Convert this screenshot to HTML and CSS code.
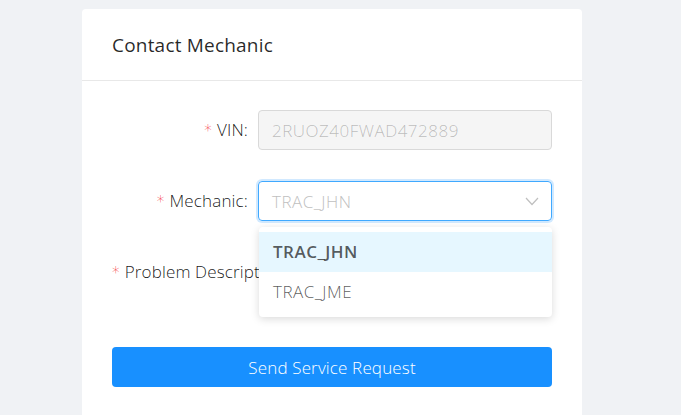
FILE: index.html
```html
<!DOCTYPE html>
<html lang="en">
<head>
<meta charset="utf-8">
<title>Contact Mechanic</title>
<link rel="stylesheet" href="styles.css">
</head>
<body>
<div class="card">
  <div class="card-head">Contact Mechanic</div>
  <div class="card-body">
    <div class="form-row">
      <div class="label"><span class="req">*</span>VIN:</div>
      <div class="control">
        <div class="input disabled caps">2RUOZ40FWAD472889</div>
      </div>
    </div>
    <div class="form-row">
      <div class="label"><span class="req">*</span>Mechanic:</div>
      <div class="control">
        <div class="input select focused">
          <span class="placeholder caps">TRAC_JHN</span>
          <svg class="chevron" width="14" height="9" viewBox="0 0 14 9"><polyline points="1,1 7,7.5 13,1" fill="none" stroke="#bfbfbf" stroke-width="1.2"/></svg>
        </div>
        <div class="dropdown">
          <div class="option active caps">TRAC_JHN</div>
          <div class="option caps">TRAC_JME</div>
        </div>
      </div>
    </div>
    <div class="form-row tall">
      <div class="label long"><span class="req">*</span>Problem Description:</div>
      <div class="control">
        <div class="textarea"></div>
      </div>
    </div>
    <button class="btn">Send Service Request</button>
  </div>
</div>
</body>
</html>
```

FILE: styles.css
```css
html, body {
  margin: 0;
  padding: 0;
}
body {
  background: #f0f2f5;
  font-family: "Open Sans", "Noto Sans", sans-serif;
  font-weight: 300;
  width: 681px;
  height: 415px;
  overflow: hidden;
}
.card {
  margin: 9px 0 0 82px;
  width: 500px;
  height: 460px;
  background: #fff;
  border-radius: 4px;
}
.card-head {
  height: 72px;
  border-bottom: 1px solid #e8e8e8;
  padding: 0 30px;
  display: flex;
  align-items: center;
  font-size: 19px;
  letter-spacing: 0.2px;
  font-weight: 400;
  color: rgba(0, 0, 0, 0.85);
  box-sizing: border-box;
}
.card-body {
  padding: 29px 30px 0;
}
.form-row {
  display: grid;
  grid-template-columns: 146px 294px;
  margin-bottom: 30px;
}
.form-row.tall {
  height: 67px;
  margin-bottom: 28px;
}
.label {
  font-size: 17px;
  letter-spacing: 0.15px;
  line-height: 40px;
  color: rgba(0, 0, 0, 0.9);
  text-align: right;
  padding-right: 10px;
  white-space: nowrap;
}
.label.long {
  padding-right: 0;
}
.req {
  color: #f5222d;
  margin-right: 5px;
  font-family: "DejaVu Sans", sans-serif;
  font-size: 15px;
}
.control {
  position: relative;
}
.input {
  height: 40px;
  box-sizing: border-box;
  border: 1px solid #d9d9d9;
  border-radius: 4px;
  padding: 0 13px;
  display: flex;
  align-items: center;
  font-size: 17px;
  color: rgba(0, 0, 0, 0.65);
}
.caps {
  letter-spacing: 0.5px;
}
.input.disabled {
  background: #f5f5f5;
  color: rgba(0, 0, 0, 0.25);
}
.select {
  justify-content: space-between;
}
.select.focused {
  border-color: #40a9ff;
  box-shadow: 0 0 0 2px rgba(24, 144, 255, 0.2);
}
.placeholder {
  color: #bfbfbf;
}
.chevron {
  margin-right: -1px;
}
.textarea {
  height: 60px;
}
.dropdown {
  position: absolute;
  top: 46px;
  left: 1px;
  right: 0;
  background: #fff;
  border-radius: 4px;
  padding: 5px 0;
  box-shadow: 0 2px 8px rgba(0, 0, 0, 0.15);
  z-index: 10;
}
.option {
  height: 40px;
  line-height: 40px;
  padding: 0 14px;
  font-size: 17px;
  color: rgba(0, 0, 0, 0.65);
}
.option.active {
  background: #e6f7ff;
  font-weight: 600;
}
.btn {
  display: block;
  width: 440px;
  height: 40px;
  border: none;
  border-radius: 4px;
  background: #1890ff;
  color: #fff;
  font-family: inherit;
  font-weight: 300;
  font-size: 17px;
  letter-spacing: 0.15px;
  padding: 0;
}
```
